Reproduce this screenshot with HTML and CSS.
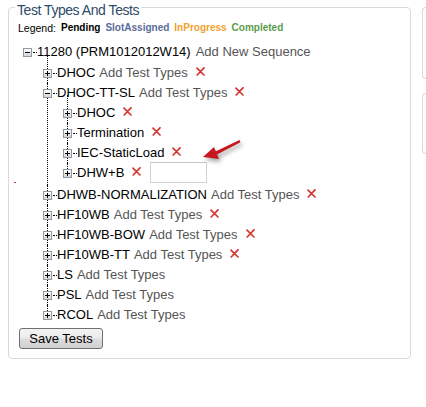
FILE: index.html
```html
<!DOCTYPE html>
<html>
<head>
<meta charset="utf-8">
<title>Test Types And Tests</title>
<link rel="stylesheet" href="styles.css">
</head>
<body>
<div class="page">
  <fieldset class="box">
    <legend class="box-title">Test Types And Tests</legend>
    <div class="legend-keys">
      <span class="key-label">Legend:</span>
      <span class="key pending">Pending</span>
      <span class="key slot">SlotAssigned</span>
      <span class="key progress">InProgress</span>
      <span class="key done">Completed</span>
    </div>

    <ul class="tree">
      <li class="node">
        <div class="row root-row"><span class="tog minus"></span><span class="stub"></span><span class="label">11280 (PRM1012012W14)</span><span class="add root-add">Add New Sequence</span></div>
        <ul class="kids">
          <li class="node">
            <div class="row"><span class="tog plus"></span><span class="stub"></span><span class="label">DHOC</span><span class="add">Add Test Types</span><span class="del"><svg viewBox="0 0 9 9" width="9" height="9"><path d="M1 1.2 L8 8 M8 0.8 L1.2 8" /></svg></span></div>
          </li>
          <li class="node">
            <div class="row"><span class="tog minus"></span><span class="stub"></span><span class="label">DHOC-TT-SL</span><span class="add">Add Test Types</span><span class="del"><svg viewBox="0 0 9 9" width="9" height="9"><path d="M1 1.2 L8 8 M8 0.8 L1.2 8" /></svg></span></div>
            <ul class="kids">
              <li class="node">
                <div class="row"><span class="tog plus"></span><span class="stub"></span><span class="label">DHOC</span><span class="del"><svg viewBox="0 0 9 9" width="9" height="9"><path d="M1 1.2 L8 8 M8 0.8 L1.2 8" /></svg></span></div>
              </li>
              <li class="node">
                <div class="row"><span class="tog plus"></span><span class="stub"></span><span class="label">Termination</span><span class="del"><svg viewBox="0 0 9 9" width="9" height="9"><path d="M1 1.2 L8 8 M8 0.8 L1.2 8" /></svg></span></div>
              </li>
              <li class="node">
                <div class="row"><span class="tog plus"></span><span class="stub"></span><span class="label">IEC-StaticLoad</span><span class="del"><svg viewBox="0 0 9 9" width="9" height="9"><path d="M1 1.2 L8 8 M8 0.8 L1.2 8" /></svg></span></div>
              </li>
              <li class="node">
                <div class="row input-row"><span class="tog plus"></span><span class="stub"></span><span class="label">DHW+B</span><span class="del"><svg viewBox="0 0 9 9" width="9" height="9"><path d="M1 1.2 L8 8 M8 0.8 L1.2 8" /></svg></span><input class="name-input" type="text"></div>
              </li>
            </ul>
          </li>
          <li class="node">
            <div class="row"><span class="tog plus"></span><span class="stub"></span><span class="label">DHWB-NORMALIZATION</span><span class="add">Add Test Types</span><span class="del"><svg viewBox="0 0 9 9" width="9" height="9"><path d="M1 1.2 L8 8 M8 0.8 L1.2 8" /></svg></span></div>
          </li>
          <li class="node">
            <div class="row"><span class="tog plus"></span><span class="stub"></span><span class="label">HF10WB</span><span class="add">Add Test Types</span><span class="del"><svg viewBox="0 0 9 9" width="9" height="9"><path d="M1 1.2 L8 8 M8 0.8 L1.2 8" /></svg></span></div>
          </li>
          <li class="node">
            <div class="row"><span class="tog plus"></span><span class="stub"></span><span class="label">HF10WB-BOW</span><span class="add">Add Test Types</span><span class="del"><svg viewBox="0 0 9 9" width="9" height="9"><path d="M1 1.2 L8 8 M8 0.8 L1.2 8" /></svg></span></div>
          </li>
          <li class="node">
            <div class="row"><span class="tog plus"></span><span class="stub"></span><span class="label">HF10WB-TT</span><span class="add">Add Test Types</span><span class="del"><svg viewBox="0 0 9 9" width="9" height="9"><path d="M1 1.2 L8 8 M8 0.8 L1.2 8" /></svg></span></div>
          </li>
          <li class="node">
            <div class="row"><span class="tog plus"></span><span class="stub"></span><span class="label">LS</span><span class="add">Add Test Types</span></div>
          </li>
          <li class="node">
            <div class="row"><span class="tog plus"></span><span class="stub"></span><span class="label">PSL</span><span class="add">Add Test Types</span></div>
          </li>
          <li class="node">
            <div class="row"><span class="tog plus"></span><span class="stub"></span><span class="label">RCOL</span><span class="add">Add Test Types</span></div>
          </li>
        </ul>
      </li>
    </ul>

    <button class="save" type="button">Save Tests</button>

    <svg class="arrow" viewBox="0 0 50 30" width="50" height="30">
      <polygon points="19.5,16.5 43.5,5 44.5,7.2 21,19.6" />
      <polygon points="7,22 18,12 23,24" />
    </svg>
    <span class="speck"></span>
  </fieldset>

  <div class="side">
    <div class="panel panel-a"></div>
    <div class="panel panel-b"></div>
  </div>
</div>
</body>
</html>
```

FILE: styles.css
```css
html, body {
  margin: 0;
  padding: 0;
  background: #ffffff;
}

body {
  font-family: "Liberation Sans", Arial, sans-serif;
  color: #000;
}

.page {
  display: flex;
  align-items: flex-start;
  gap: 11px;
  box-sizing: border-box;
  width: 426px;
  padding-left: 8px;
  overflow: hidden;
}

.box {
  position: relative;
  flex: 0 0 auto;
  box-sizing: border-box;
  width: 403px;
  margin: 0;
  padding: 0 10px 9px 10px;
  border: 1px solid #d9d9d9;
  border-radius: 4px;
}

.box-title {
  margin-left: -4px;
  padding: 5px 2px 0 2px;
  font-size: 14px;
  line-height: 10px;
  letter-spacing: -0.45px;
  color: #2f4a6a;
}

.legend-keys {
  display: flex;
  gap: 5px;
  margin: 7px 0 0 -1px;
  font-size: 10px;
  line-height: 12px;
  white-space: nowrap;
}

.key-label {
  font-size: 10.5px;
  color: #000;
}

.key {
  font-weight: bold;
}

.pending { color: #000; }
.slot { color: #5a6a9c; }
.progress { color: #f0a22e; }
.done { color: #5b9c4c; }

.tree,
.kids {
  list-style: none;
  margin: 0;
  padding: 0;
}

.tree {
  margin-top: 8px;
}

.kids {
  padding-left: 20px;
}

.node {
  position: relative;
}

.kids > .node::before {
  content: "";
  position: absolute;
  left: 8px;
  top: -8px;
  bottom: 0;
  border-left: 1px dotted #000;
}

.kids > .node + .node::before {
  top: 0;
}

.kids > .node:last-child::before {
  bottom: auto;
  height: 10px;
}

.row {
  display: flex;
  align-items: center;
  height: 20px;
  padding-left: 4px;
  font-size: 13px;
  line-height: 20px;
  white-space: nowrap;
}

.root-row {
  padding-bottom: 1px;
}

.input-row {
  padding-bottom: 2px;
}

.tog {
  position: relative;
  flex: 0 0 auto;
  box-sizing: border-box;
  width: 9px;
  height: 9px;
  border: 1px solid #8e9aa4;
  background: linear-gradient(#ffffff, #d6d6d6);
}

.tog::before {
  content: "";
  position: absolute;
  left: 1px;
  top: 3px;
  width: 5px;
  height: 1px;
  background: #000;
}

.tog.plus::after {
  content: "";
  position: absolute;
  left: 3px;
  top: 1px;
  width: 1px;
  height: 5px;
  background: #000;
}

.stub {
  flex: 0 0 auto;
  width: 4px;
  margin-left: 1px;
  border-top: 1px dotted #000;
}

.label {
  color: #000;
}

.add {
  margin-left: 4px;
  color: #555;
}

.root-add {
  margin-left: 5px;
}

.del {
  display: flex;
  margin-left: 8px;
  margin-bottom: 4px;
}

.del svg {
  display: block;
}

.del path {
  fill: none;
  stroke: #d6352f;
  stroke-width: 1.7;
  stroke-linecap: round;
}

.name-input {
  box-sizing: border-box;
  width: 57px;
  height: 21px;
  margin: 0 0 2px 9px;
  padding: 0 3px;
  border: 1px solid #d2d2d2;
  border-top-color: #c4c4c4;
  background: #fff;
  font: 13px "Liberation Sans", Arial, sans-serif;
}

.save {
  display: block;
  box-sizing: border-box;
  width: 84px;
  height: 21px;
  margin-top: 3px;
  padding: 0;
  border: 1px solid #707070;
  border-radius: 3px;
  background: linear-gradient(#f3f3f3, #ebebeb 48%, #dddddd 52%, #d0d0d0);
  font: 13px "Liberation Sans", Arial, sans-serif;
  color: #000;
}

.arrow {
  position: absolute;
  left: 187px;
  top: 120px;
  overflow: visible;
  filter: drop-shadow(2px 3px 2px rgba(0, 0, 0, 0.35));
}

.arrow polygon {
  fill: #c7171d;
}

.speck {
  position: absolute;
  left: 5px;
  top: 167px;
  width: 2px;
  height: 1px;
  background: #a33a5c;
}

.side {
  display: flex;
  flex-direction: column;
  gap: 14px;
  margin-top: 7px;
}

.panel {
  box-sizing: border-box;
  width: 4px;
  border: 1px solid #dadada;
  border-right: none;
  border-radius: 4px 0 0 4px;
}

.panel-a {
  height: 72px;
}

.panel-b {
  height: 61px;
}
```
